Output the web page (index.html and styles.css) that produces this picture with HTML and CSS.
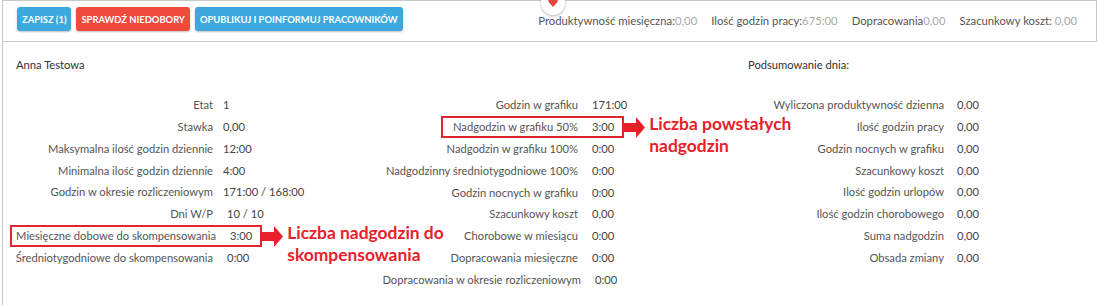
FILE: index.html
```html
<!DOCTYPE html>
<html lang="pl">
<head>
    <meta charset="UTF-8">
    <title>Grafik - podsumowanie</title>
    <link rel="stylesheet" href="styles.css">
</head>
<body>
    <div class="page">
        <div class="toolbar">
            <div class="actions">
                <button class="btn btn-blue">ZAPISZ (1)</button>
                <button class="btn btn-red">SPRAWDŹ NIEDOBORY</button>
                <button class="btn btn-blue">OPUBLIKUJ I POINFORMUJ PRACOWNIKÓW</button>
            </div>
            <span class="toggle">
                <svg width="10" height="9" viewBox="0 0 10 9"><path d="M5 9 L0.8 4.2 A2.4 2.4 0 0 1 5 1.2 A2.4 2.4 0 0 1 9.2 4.2 Z" fill="#e8453c"/></svg>
            </span>
            <div class="stats">
                <span>Produktywność miesięczna:<em>0,00</em></span>
                <span>Ilość godzin pracy:<em>675:00</em></span>
                <span>Dopracowania<em>0,00</em></span>
                <span>Szacunkowy koszt: <em>0,00</em></span>
            </div>
        </div>

        <div class="panel">
            <div class="panel-head">
                <div class="name">Anna Testowa</div>
                <div></div>
                <div class="summary-title">Podsumowanie dnia:</div>
            </div>

            <div class="columns">
                <div class="col col-left">
                    <div class="row"><span class="label">Etat</span><span class="value">1</span></div>
                    <div class="row"><span class="label">Stawka</span><span class="value">0,00</span></div>
                    <div class="row"><span class="label">Maksymalna ilość godzin dziennie</span><span class="value">12:00</span></div>
                    <div class="row"><span class="label">Minimalna ilość godzin dziennie</span><span class="value">4:00</span></div>
                    <div class="row"><span class="label">Godzin w okresie rozliczeniowym</span><span class="value">171:00 / 168:00</span></div>
                    <div class="row"><span class="label">Dni W/P</span><span class="value shift">10 / 10</span></div>
                    <div class="row marked marked-left">
                        <span class="label">Miesięczne dobowe do skompensowania</span><span class="value">3:00</span>
                        <div class="note">
                            <svg class="arrow" width="22" height="21" viewBox="0 0 22 21"><path d="M0 6 H13 V0 L22 10.5 L13 21 V15 H0 Z" fill="#e8202a"/></svg>
                            <p>Liczba nadgodzin do<br>skompensowania</p>
                        </div>
                    </div>
                    <div class="row"><span class="label">Średniotygodniowe do skompensowania</span><span class="value shift">0:00</span></div>
                </div>

                <div class="col col-mid">
                    <div class="row"><span class="label">Godzin w grafiku</span><span class="value">171:00</span></div>
                    <div class="row marked marked-mid">
                        <span class="label">Nadgodzin w grafiku 50%</span><span class="value">3:00</span>
                        <div class="note">
                            <svg class="arrow" width="22" height="21" viewBox="0 0 22 21"><path d="M0 6 H13 V0 L22 10.5 L13 21 V15 H0 Z" fill="#e8202a"/></svg>
                            <p>Liczba powstałych<br>nadgodzin</p>
                        </div>
                    </div>
                    <div class="row"><span class="label">Nadgodzin w grafiku 100%</span><span class="value">0:00</span></div>
                    <div class="row"><span class="label">Nadgodzinny średniotygodniowe 100%</span><span class="value">0:00</span></div>
                    <div class="row"><span class="label">Godzin nocnych w grafiku</span><span class="value">0:00</span></div>
                    <div class="row"><span class="label">Szacunkowy koszt</span><span class="value">0,00</span></div>
                    <div class="row"><span class="label">Chorobowe w miesiącu</span><span class="value">0:00</span></div>
                    <div class="row"><span class="label">Dopracowania miesięczne</span><span class="value">0:00</span></div>
                    <div class="row"><span class="label wide">Dopracowania w okresie rozliczeniowym</span><span class="value">0:00</span></div>
                </div>

                <div class="col col-right">
                    <div class="row"><span class="label">Wyliczona produktywność dzienna</span><span class="value">0,00</span></div>
                    <div class="row"><span class="label">Ilość godzin pracy</span><span class="value">0,00</span></div>
                    <div class="row"><span class="label">Godzin nocnych w grafiku</span><span class="value">0,00</span></div>
                    <div class="row"><span class="label">Szacunkowy koszt</span><span class="value">0,00</span></div>
                    <div class="row"><span class="label">Ilość godzin urlopów</span><span class="value">0,00</span></div>
                    <div class="row"><span class="label">Ilość godzin chorobowego</span><span class="value">0,00</span></div>
                    <div class="row"><span class="label">Suma nadgodzin</span><span class="value">0,00</span></div>
                    <div class="row"><span class="label">Obsada zmiany</span><span class="value">0,00</span></div>
                </div>
            </div>
        </div>
    </div>
</body>
</html>
```

FILE: styles.css
```css
body {
    margin: 0;
    background: #fff;
    font-family: Lato, "Open Sans", Arial, sans-serif;
    font-size: 11.2px;
    color: #555;
}

.page {
    margin-left: 2px;
    height: 305px;
    border-left: 1px solid #c8c8c8;
    overflow: hidden;
}

/* top bar */
.toolbar {
    position: relative;
    display: flex;
    align-items: flex-start;
    height: 42px;
    margin-right: 1px;
    padding: 6px 19px 0 14px;
    box-sizing: border-box;
    border-top: 1px solid #c8c8c8;
    border-right: 1px solid #c8c8c8;
    border-bottom: 1px solid #c8c8c8;
}

.actions {
    display: flex;
    gap: 5px;
}

.btn {
    height: 24px;
    padding: 0 5px;
    border: none;
    border-radius: 3px;
    font-family: Lato, Arial, sans-serif;
    font-size: 9.4px;
    font-weight: bold;
    color: #fff;
    box-shadow: 0 1px 2px rgba(0, 0, 0, 0.25);
    cursor: pointer;
}

.btn-blue {
    background-color: #3ca9de;
}

.btn-red {
    background-color: #ef4a3b;
}

.toggle {
    position: absolute;
    left: 538px;
    top: -10px;
    width: 24px;
    height: 24px;
    border-radius: 50%;
    background: #fff;
    box-shadow: 0 1px 3px rgba(0, 0, 0, 0.3);
    display: flex;
    justify-content: center;
    align-items: flex-end;
    padding-bottom: 8px;
    box-sizing: border-box;
}

.stats {
    margin-left: auto;
    display: flex;
    gap: 14px;
    padding-top: 7px;
    font-size: 11.3px;
    color: #555;
}

.stats em {
    font-style: normal;
    color: #aaa;
}

/* lower panel */
.panel {
    padding: 15px 0 0 7px;
}

.panel-head,
.columns {
    display: grid;
    grid-template-columns: 360px 365px 1fr;
}

.panel-head {
    color: #333;
    line-height: 16px;
    margin-bottom: 21px;
}

.name {
    padding-left: 6px;
}

.summary-title {
    padding-left: 13px;
}

.col {
    display: flex;
    flex-direction: column;
}

.row {
    display: flex;
    align-items: center;
    height: 21.75px;
    white-space: nowrap;
}

.label {
    text-align: right;
}

.value {
    color: #444;
}

.col-left .label { width: 203px; }
.col-left .value { padding-left: 10px; }
.col-left .value.shift { padding-left: 14px; }

.col-mid .label { width: 208px; }
.col-mid .value { padding-left: 14px; }
.col-mid .label.wide { width: 211px; }

.col-right .label { width: 209px; }
.col-right .value { padding-left: 13px; }

/* highlighted rows */
.marked {
    position: relative;
    align-self: flex-start;
    box-sizing: border-box;
    height: 22px;
    padding-right: 8px;
    border: 2px solid #e0262c;
}

.marked-left .label { width: 204px; }
.marked-left .value { padding-left: 14px; }

.marked-mid {
    margin-left: 71px;
}

.marked-mid .label { width: 135px; }

.note {
    position: absolute;
    left: calc(100% + 1px);
    top: -1px;
    display: flex;
    align-items: flex-start;
}

.note .arrow {
    flex-shrink: 0;
}

.note p {
    margin: -4px 0 0 4px;
    font-family: Lato, Arial, sans-serif;
    font-size: 17.4px;
    font-weight: bold;
    line-height: 22px;
    color: #e8202a;
}
```
